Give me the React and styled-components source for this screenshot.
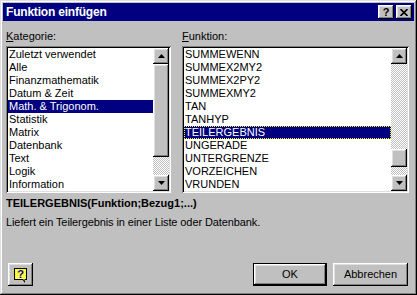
import React from 'react';
import styled, { createGlobalStyle } from 'styled-components';

const GlobalStyle = createGlobalStyle`
  html, body {
    margin: 0;
    padding: 0;
    background: #c0c0c0;
  }
  body {
    font-family: "Liberation Sans", Arial, sans-serif;
    font-size: 11px;
    color: #000;
  }
`;

const raised = `
  box-shadow: inset -1px -1px #000, inset 1px 1px #fff,
    inset -2px -2px #808080, inset 2px 2px #dfdfdf;
`;

const sunken = `
  box-shadow: inset 1px 1px #808080, inset -1px -1px #fff,
    inset 2px 2px #000, inset -2px -2px #dfdfdf;
`;

const kategorien = [
  'Zuletzt verwendet',
  'Alle',
  'Finanzmathematik',
  'Datum & Zeit',
  'Math. & Trigonom.',
  'Statistik',
  'Matrix',
  'Datenbank',
  'Text',
  'Logik',
  'Information',
];

const funktionen = [
  'SUMMEWENN',
  'SUMMEX2MY2',
  'SUMMEX2PY2',
  'SUMMEXMY2',
  'TAN',
  'TANHYP',
  'TEILERGEBNIS',
  'UNGERADE',
  'UNTERGRENZE',
  'VORZEICHEN',
  'VRUNDEN',
];

const Arrow = ({ down }) => (
  <svg width="7" height="4" viewBox="0 0 7 4">
    {down ? <polygon points="0,0 7,0 3.5,4" fill="#000" /> : <polygon points="3.5,0 7,4 0,4" fill="#000" />}
  </svg>
);

// speech bubble with a question mark
const HelpIcon = () => (
  <svg width="14" height="16" viewBox="0 0 14 16">
    <defs>
      <pattern id="dither" width="2" height="2" patternUnits="userSpaceOnUse">
        <rect width="2" height="2" fill="#ffff00" />
        <rect width="1" height="1" fill="#fff" />
      </pattern>
    </defs>
    <rect x="0.5" y="0.5" width="12" height="11" fill="url(#dither)" stroke="#000" />
    <polygon points="8,11 11,11 11,15" fill="#000" />
    <polygon points="8.8,10.5 10.5,10.5 10.5,13" fill="#ffff00" />
    <text x="6.5" y="10" textAnchor="middle" fontFamily="Liberation Sans, Arial, sans-serif" fontWeight="bold" fontSize="11" fill="#0000a0">?</text>
  </svg>
);

const ListBox = ({ items, selected, thumbAt, thumbSize }) => {
  const trackBefore = thumbAt;
  const trackAfter = 111 - thumbAt - thumbSize;
  return (
    <ListFrame>
      <Items>
        {items.map((item, i) => (
          <Item key={item} $selected={i === selected} $focused={i === selected && thumbAt > 0}>
            {item}
          </Item>
        ))}
      </Items>
      <ScrollBar>
        <ScrollButton><Arrow /></ScrollButton>
        {trackBefore > 0 && <Track $size={trackBefore} />}
        <Thumb $size={thumbSize} />
        {trackAfter > 0 && <Track $size={trackAfter} />}
        <ScrollButton><Arrow down /></ScrollButton>
      </ScrollBar>
    </ListFrame>
  );
};

const App = () => {
  return (
    <>
      <GlobalStyle />
      <Window>
        <TitleBar>
          <Title>Funktion einfügen</Title>
          <CaptionButton>?</CaptionButton>
          <CaptionButton $gap>
            <svg width="8" height="7" viewBox="0 0 8 7">
              <path d="M0.5 0 L7.5 7 M7.5 0 L0.5 7" stroke="#000" strokeWidth="1.6" />
            </svg>
          </CaptionButton>
        </TitleBar>
        <Body>
          <Lists>
            <Panel>
              <Label><u>K</u>ategorie:</Label>
              <ListBox items={kategorien} selected={4} thumbAt={0} thumbSize={93} />
            </Panel>
            <Panel>
              <Label><u>F</u>unktion:</Label>
              <ListBox items={funktionen} selected={6} thumbAt={85} thumbSize={18} />
            </Panel>
          </Lists>
          <Signature>TEILERGEBNIS(Funktion;Bezug1;...)</Signature>
          <Description>Liefert ein Teilergebnis in einer Liste oder Datenbank.</Description>
          <Footer>
            <HelpButton><HelpIcon /></HelpButton>
            <Spacer />
            <DialogButton $default>OK</DialogButton>
            <DialogButton>Abbrechen</DialogButton>
          </Footer>
        </Body>
      </Window>
    </>
  );
};

const Window = styled.div`
  width: 417px;
  height: 295px;
  box-sizing: border-box;
  padding: 3px;
  background: #c0c0c0;
  box-shadow: inset -1px -1px #000, inset 1px 1px #dfdfdf,
    inset -2px -2px #808080, inset 2px 2px #fff;
  display: flex;
  flex-direction: column;
`;

const TitleBar = styled.div`
  height: 18px;
  background: #000080;
  color: #fff;
  display: flex;
  align-items: center;
  padding: 0 2px 0 3px;
`;

const Title = styled.div`
  flex: 1;
  font-weight: bold;
  font-size: 12px;
  letter-spacing: -0.2px;
  line-height: 18px;
`;

const CaptionButton = styled.div`
  width: 16px;
  height: 14px;
  box-sizing: border-box;
  background: #c0c0c0;
  ${raised}
  color: #000;
  font-weight: bold;
  font-size: 11px;
  line-height: 14px;
  display: flex;
  align-items: center;
  justify-content: center;
  margin-left: ${(p) => (p.$gap ? '2px' : '0')};
`;

const Body = styled.div`
  flex: 1;
  display: flex;
  flex-direction: column;
  padding: 9px 5px 6px 3px;
`;

const Lists = styled.div`
  display: grid;
  grid-template-columns: 165px 227px;
  column-gap: 11px;
`;

const Panel = styled.div`
  display: flex;
  flex-direction: column;
`;

const Label = styled.div`
  line-height: 13px;
  margin-bottom: 3px;
  u {
    text-decoration-thickness: 1px;
    text-underline-offset: 1px;
  }
`;

const ListFrame = styled.div`
  height: 147px;
  box-sizing: border-box;
  padding: 2px;
  background: #fff;
  ${sunken}
  display: flex;
`;

const Items = styled.div`
  flex: 1;
  overflow: hidden;
`;

const Item = styled.div`
  height: 13px;
  line-height: 13px;
  padding: 0 2px 0 1px;
  white-space: nowrap;
  background: ${(p) => (p.$selected ? '#000080' : 'transparent')};
  color: ${(p) => (p.$selected ? '#fff' : '#000')};
  outline: ${(p) => (p.$focused ? '1px dotted #ffff00' : 'none')};
  outline-offset: -1px;
`;

const ScrollBar = styled.div`
  width: 16px;
  display: flex;
  flex-direction: column;
`;

const ScrollButton = styled.div`
  width: 16px;
  height: 16px;
  flex: none;
  box-sizing: border-box;
  background: #c0c0c0;
  ${raised}
  display: flex;
  align-items: center;
  justify-content: center;
`;

const Thumb = styled.div`
  height: ${(p) => p.$size}px;
  flex: none;
  background: #c0c0c0;
  ${raised}
`;

const Track = styled.div`
  height: ${(p) => p.$size}px;
  flex: none;
  background-color: #c0c0c0;
  background-image: conic-gradient(#fff 25%, transparent 0 50%, #fff 0 75%, transparent 0);
  background-size: 2px 2px;
`;

const Signature = styled.div`
  margin-top: 4px;
  font-weight: bold;
  line-height: 13px;
`;

const Description = styled.div`
  margin-top: 6px;
  line-height: 13px;
  letter-spacing: -0.1px;
`;

const Footer = styled.div`
  margin-top: auto;
  display: flex;
  align-items: center;
  padding: 0 1px 0 2px;
`;

const Spacer = styled.div`
  flex: 1;
`;

const HelpButton = styled.div`
  width: 25px;
  height: 23px;
  box-sizing: border-box;
  background: #c0c0c0;
  ${raised}
  display: flex;
  align-items: center;
  justify-content: center;
  padding: 2px 0 0 1px;
`;

const DialogButton = styled.div`
  width: ${(p) => (p.$default ? '74px' : '75px')};
  height: 23px;
  box-sizing: border-box;
  background: #c0c0c0;
  border: ${(p) => (p.$default ? '1px solid #000' : 'none')};
  ${raised}
  margin-left: ${(p) => (p.$default ? '0' : '6px')};
  display: flex;
  align-items: center;
  justify-content: center;
  line-height: 13px;
`;

export default App;
